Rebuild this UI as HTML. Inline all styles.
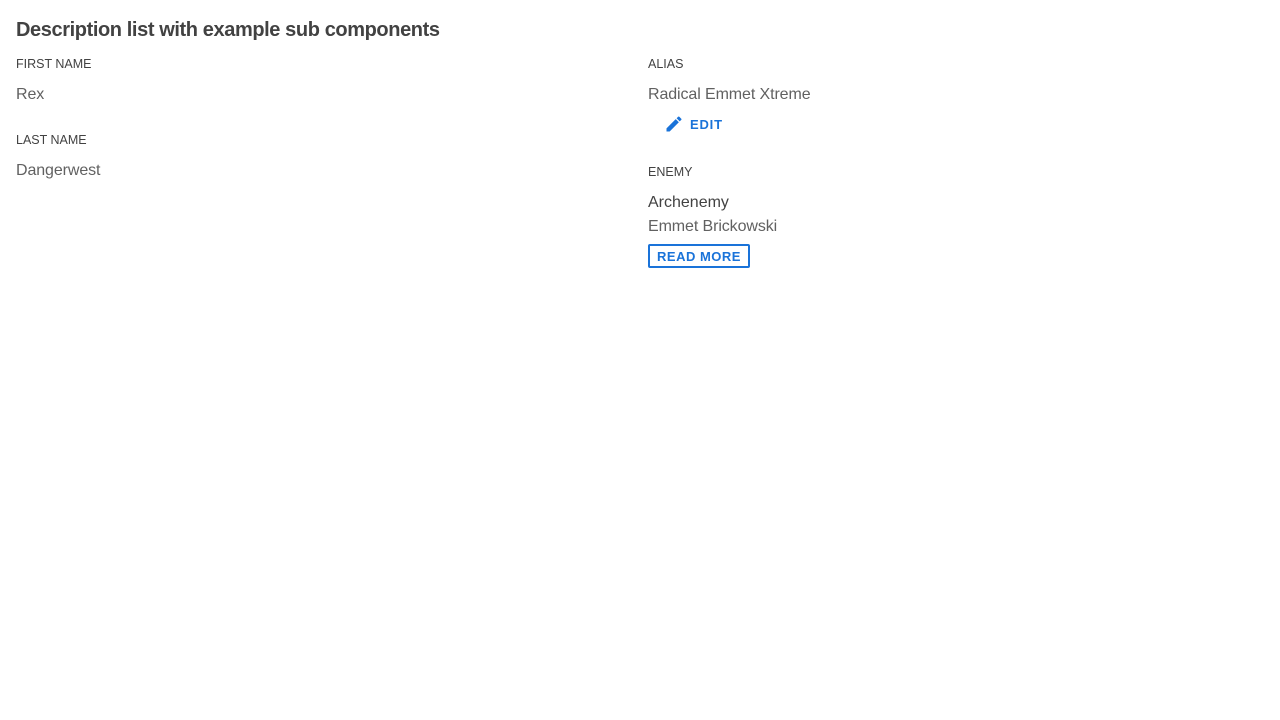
<!DOCTYPE html>
<html><head><style>
body{margin:0;background:#fff;font-family:"Liberation Sans",sans-serif;color:#424242;}
.a{position:absolute;white-space:nowrap;}
h1{position:absolute;left:16px;top:19px;margin:0;font-size:20px;font-weight:bold;color:#424242;letter-spacing:-0.4px;}
.lab{font-size:12.5px;color:#424242;}
.val{font-size:16px;color:#616161;letter-spacing:-0.1px;}
.blue{color:#1a73d9;font-weight:bold;font-size:13px;letter-spacing:0.8px;}
</style></head><body>
<h1>Description list with example sub components</h1>
<div class="a lab" style="left:16px;top:57px">FIRST NAME</div>
<div class="a val" style="left:16px;top:86px">Rex</div>
<div class="a lab" style="left:16px;top:133px">LAST NAME</div>
<div class="a val" style="left:16px;top:162px">Dangerwest</div>
<div class="a lab" style="left:648px;top:57px">ALIAS</div>
<div class="a val" style="left:648px;top:86px">Radical Emmet Xtreme</div>
<svg class="a" style="left:664px;top:114px" width="20" height="20" viewBox="0 0 24 24"><path fill="#1a73d9" d="M3 17.25V21h3.75L17.81 9.94l-3.75-3.75L3 17.25zM20.71 7.04a1 1 0 000-1.41l-2.34-2.34a1 1 0 00-1.41 0l-1.83 1.83 3.75 3.75 1.83-1.83z"/></svg>
<div class="a blue" style="left:690px;top:117px">EDIT</div>
<div class="a lab" style="left:648px;top:165px">ENEMY</div>
<div class="a" style="left:648px;top:194px;font-size:16px;color:#424242">Archenemy</div>
<div class="a val" style="left:648px;top:218px">Emmet Brickowski</div>
<div class="a blue" style="left:648px;top:244px;width:98px;height:20px;border:2px solid #1a73d9;border-radius:2px;text-align:center;line-height:21px;letter-spacing:0.5px;">READ MORE</div>
</body></html>
